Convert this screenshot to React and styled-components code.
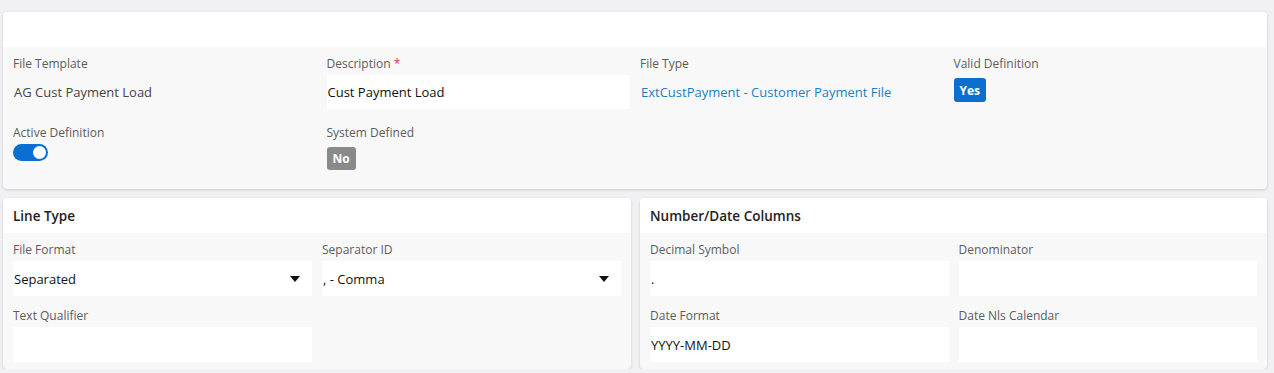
import React from "react";
import styled, { createGlobalStyle } from "styled-components";

const GlobalStyle = createGlobalStyle`
    body {
        margin: 0;
        background: #f1f0f3;
        font-family: "Open Sans", "Noto Sans", sans-serif;
    }
`;

const App = () => {
    return (
        <>
            <GlobalStyle />
            <Page>
                <Card>
                    <CardHeader />
                    <TopBody>
                        <Field>
                            <Label>File Template</Label>
                            <Control>
                                <Value>AG Cust Payment Load</Value>
                            </Control>
                        </Field>
                        <Field>
                            <Label>
                                Description <Req>*</Req>
                            </Label>
                            <Control>
                                <Input>Cust Payment Load</Input>
                            </Control>
                        </Field>
                        <Field>
                            <Label>File Type</Label>
                            <Control>
                                <Link href="#">ExtCustPayment - Customer Payment File</Link>
                            </Control>
                        </Field>
                        <Field>
                            <Label>Valid Definition</Label>
                            <Control>
                                <Badge $tone="yes">Yes</Badge>
                            </Control>
                        </Field>
                        <Field>
                            <Label>Active Definition</Label>
                            <Control>
                                <Toggle />
                            </Control>
                        </Field>
                        <Field>
                            <Label>System Defined</Label>
                            <Control>
                                <Badge $tone="no">No</Badge>
                            </Control>
                        </Field>
                    </TopBody>
                </Card>

                <Columns>
                    <Card>
                        <CardHeader>
                            <Title>Line Type</Title>
                        </CardHeader>
                        <GroupBody>
                            <Field>
                                <Label>File Format</Label>
                                <Input $select>
                                    Separated
                                    <Caret />
                                </Input>
                            </Field>
                            <Field>
                                <Label>Separator ID</Label>
                                <Input $select>
                                    , - Comma
                                    <Caret />
                                </Input>
                            </Field>
                            <Field>
                                <Label>Text Qualifier</Label>
                                <Input />
                            </Field>
                        </GroupBody>
                    </Card>
                    <Card>
                        <CardHeader>
                            <Title>Number/Date Columns</Title>
                        </CardHeader>
                        <GroupBody>
                            <Field>
                                <Label>Decimal Symbol</Label>
                                <Input>.</Input>
                            </Field>
                            <Field>
                                <Label>Denominator</Label>
                                <Input />
                            </Field>
                            <Field>
                                <Label>Date Format</Label>
                                <Input>YYYY-MM-DD</Input>
                            </Field>
                            <Field>
                                <Label>Date Nls Calendar</Label>
                                <Input />
                            </Field>
                        </GroupBody>
                    </Card>
                </Columns>
            </Page>
        </>
    );
};

const Page = styled.div`
    display: flex;
    flex-direction: column;
    gap: 9px;
    padding: 12px 7px 0 3px;
`;

const Card = styled.div`
    background: #f8f8f8;
    border-radius: 4px;
    box-shadow: 0 1px 3px rgba(0, 0, 0, 0.16);
    overflow: hidden;
`;

const CardHeader = styled.div`
    display: flex;
    align-items: center;
    height: 35px;
    padding: 0 10px;
    background: #fff;
`;

const Title = styled.h4`
    margin: 0;
    font-size: 13.5px;
    font-weight: 600;
    color: #222;
`;

const TopBody = styled.div`
    display: grid;
    grid-template-columns: repeat(4, 1fr);
    column-gap: 10px;
    row-gap: 15px;
    padding: 8px 10px 11px;
`;

const Columns = styled.div`
    display: grid;
    grid-template-columns: 628px 627px;
    gap: 9px;
`;

const GroupBody = styled.div`
    display: grid;
    grid-template-columns: 1fr 1fr;
    column-gap: 10px;
    row-gap: 11px;
    padding: 8px 10px 7px;
`;

const Field = styled.div`
    display: flex;
    flex-direction: column;
    gap: 3px;
    min-width: 0;
`;

const Label = styled.label`
    font-size: 12px;
    line-height: 17px;
    color: #5c5c5c;
`;

const Req = styled.span`
    color: #e0393e;
`;

const Control = styled.div`
    display: flex;
    align-items: flex-start;
    height: 34px;
`;

const Value = styled.span`
    line-height: 34px;
    font-size: 13px;
    color: #444;
    padding-left: 1px;
`;

const Link = styled.a`
    line-height: 34px;
    font-size: 13px;
    color: #1a80c4;
    text-decoration: none;
    padding-left: 1px;
`;

const Input = styled.div`
    display: flex;
    align-items: center;
    justify-content: ${(p) => (p.$select ? "space-between" : "flex-start")};
    width: 100%;
    height: 35px;
    padding: 0 ${(p) => (p.$select ? "12px" : "2px")} 0 1px;
    box-sizing: border-box;
    background: #fff;
    font-size: 13px;
    color: #111;

    ${Control} & {
        height: 34px;
    }
`;

const Caret = styled.span`
    width: 0;
    height: 0;
    border-left: 5px solid transparent;
    border-right: 5px solid transparent;
    border-top: 6px solid #111;
`;

const Badge = styled.span`
    margin-top: 3px;
    display: inline-flex;
    align-items: center;
    justify-content: center;
    height: ${(p) => (p.$tone === "yes" ? "24px" : "23px")};
    padding: 0 6px;
    border-radius: 3px;
    background: ${(p) => (p.$tone === "yes" ? "#0b6fd1" : "#8a8a8a")};
    color: #fff;
    font-size: 12px;
    font-weight: 700;
`;

const Toggle = styled.span`
    position: relative;
    display: inline-block;
    width: 35px;
    height: 17px;
    border-radius: 9px;
    background: #0b6fd1;

    &::after {
        content: "";
        position: absolute;
        top: 2px;
        right: 2px;
        width: 13px;
        height: 13px;
        border-radius: 50%;
        background: #fff;
    }
`;

export default App;
